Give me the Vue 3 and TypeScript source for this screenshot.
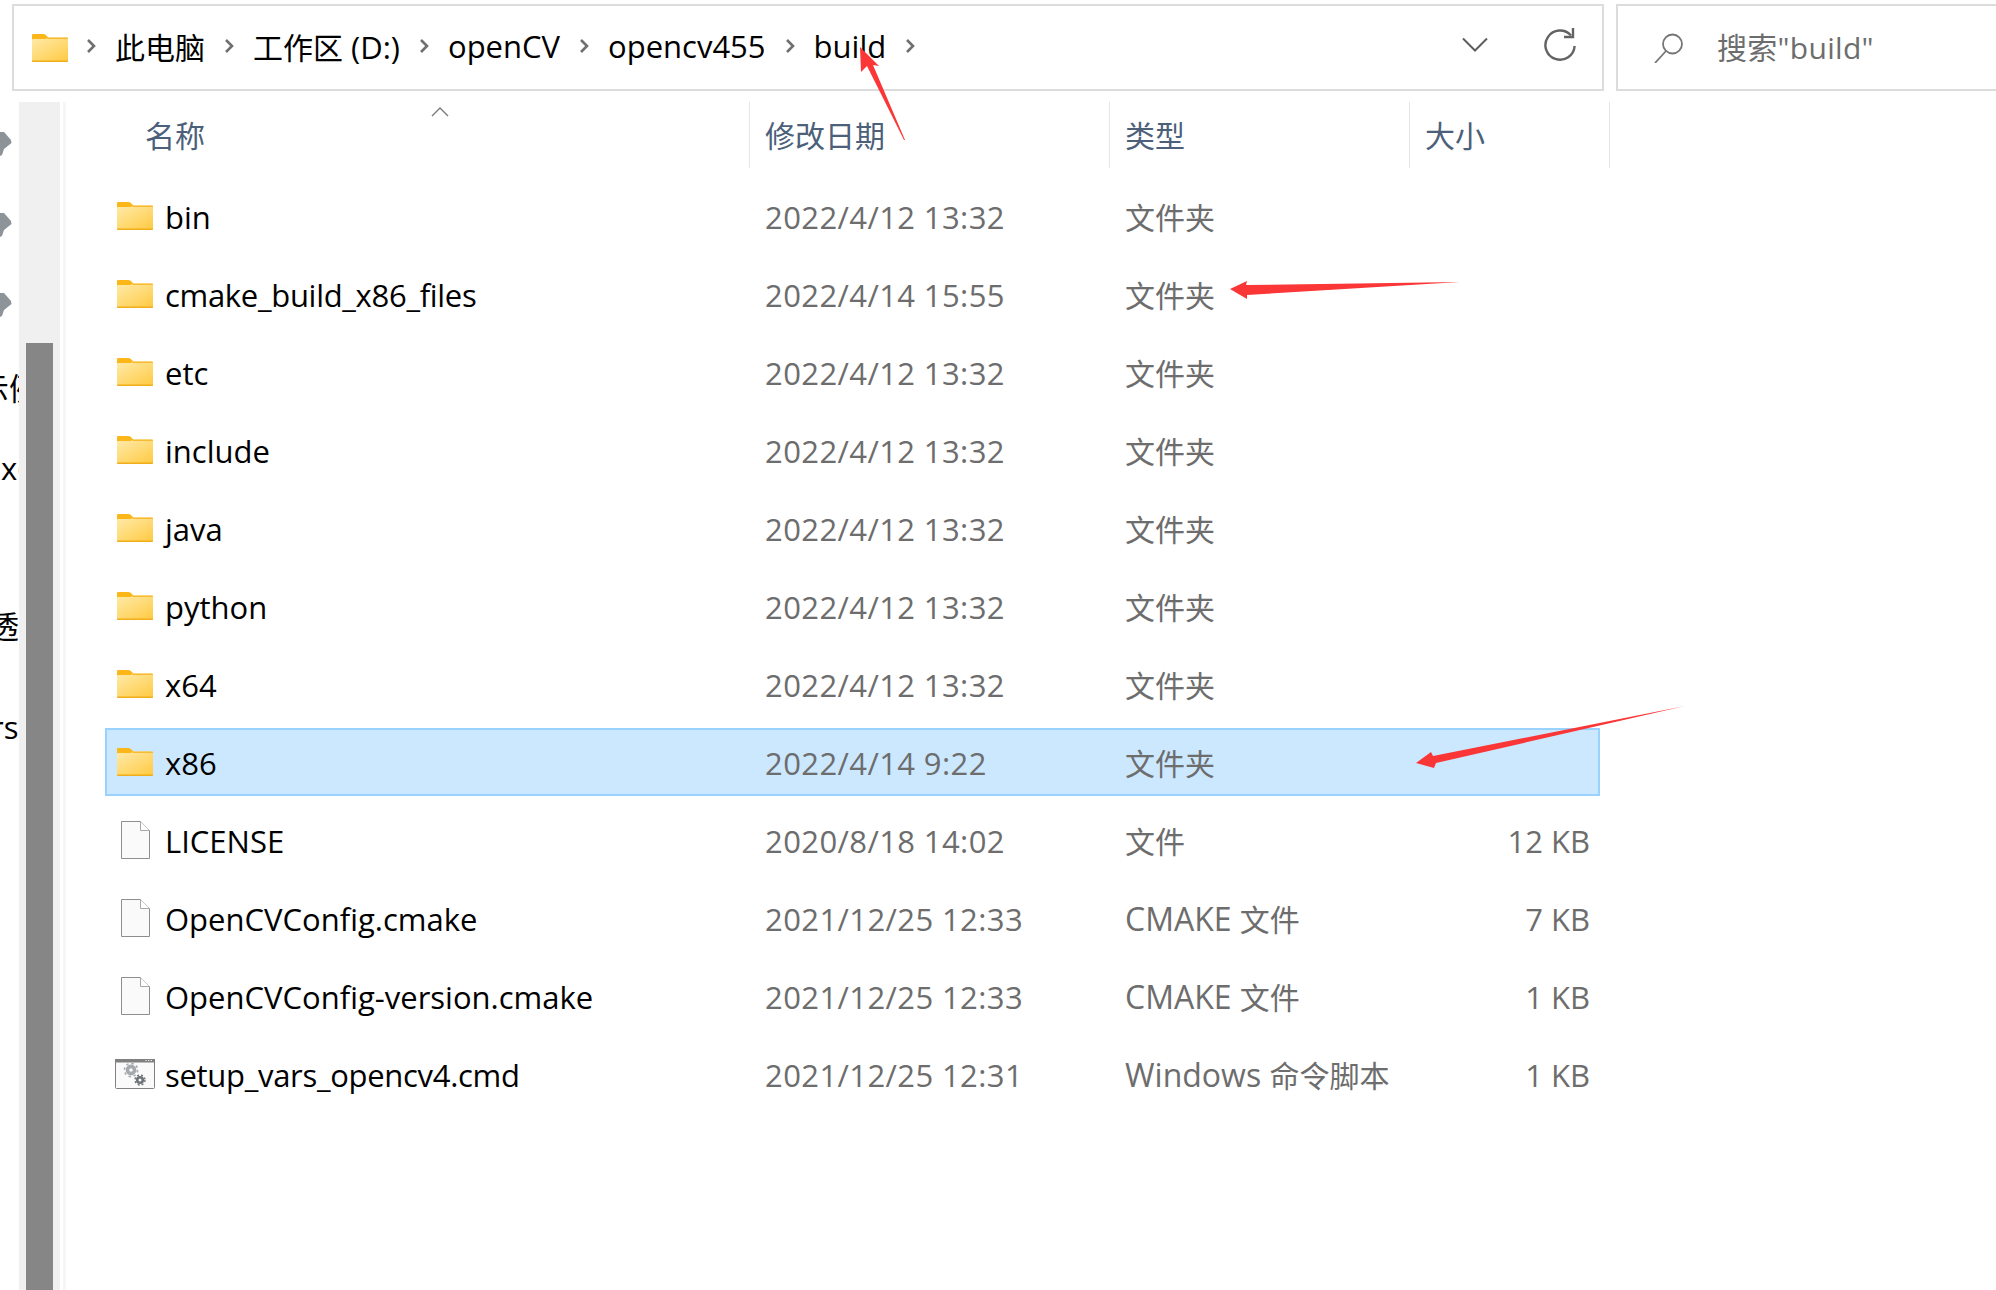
<template>
  <div class="window">
    <div class="topbar">
      <div class="address">
        <svg class="folder crumb-folder" viewBox="0 0 36 28"><use href="#folder-shape" /></svg>
        <template v-for="crumb in crumbs" :key="crumb.latin + crumb.cjk">
          <svg class="chev" viewBox="0 0 10 16"><path d="M2 2l6 6-6 6" /></svg>
          <span class="crumb"><span class="cjk">{{ crumb.cjk }}</span>{{ crumb.latin }}</span>
        </template>
        <svg class="chev" viewBox="0 0 10 16"><path d="M2 2l6 6-6 6" /></svg>
        <svg class="drop" viewBox="0 0 26 16"><path d="M1 1.5l12 12 12-12" /></svg>
        <svg class="refresh" viewBox="0 0 34 36">
          <path d="M28 8.5A14.6 14.6 0 1 0 31.6 19" />
          <path d="M30 1v9h-9" />
        </svg>
      </div>
      <div class="search">
        <svg class="lens" viewBox="0 0 30 30">
          <circle cx="18.5" cy="11" r="9.5" />
          <path d="M12 18L1 30" />
        </svg>
        <span class="search-text">搜索"build"</span>
      </div>
    </div>

    <div class="main">
      <div class="nav">
        <div v-for="item in navItems" :key="item.id" class="nav-item" :style="{ height: item.height + 'px' }">
          <svg v-if="item.pin" class="pin" viewBox="0 0 12 24"><path d="M0 0L4 0L11 8L11.500 11L4 17L2 23L0 24Z" /></svg>
          <span v-else class="nav-text" :style="{ marginLeft: item.shift + 'px' }">{{ item.text }}</span>
        </div>
      </div>
      <div class="track"><div class="thumb"></div></div>
      <div class="rule"></div>

      <div class="files">
        <div class="head">
          <div class="col col-name">名称<svg class="sort" viewBox="0 0 18 10"><path d="M1 9l8-8 8 8" /></svg></div>
          <div class="col col-date">修改日期</div>
          <div class="col col-type">类型</div>
          <div class="col col-size">大小</div>
        </div>
        <div class="rows">
          <div v-for="row in rows" :key="row.name" class="row" :class="{ selected: row.selected }">
            <div class="icon-box">
              <svg v-if="row.icon === 'folder'" class="folder" viewBox="0 0 36 28"><use href="#folder-shape" /></svg>
              <svg v-else-if="row.icon === 'file'" class="file" viewBox="0 0 29 38">
                <path d="M.5.5h19l9 9v28H.5z" fill="#fafafa" stroke="#8e8e8e" />
                <path d="M19.500.5v9h9" fill="#fff" stroke="#a8a8a8" />
              </svg>
              <svg v-else class="cmd" viewBox="0 0 40 30">
                <rect x=".5" y=".5" width="39" height="29" rx="1" fill="#fafafa" stroke="#808080" />
                <rect x="0" y="0" width="40" height="3.500" fill="#808080" />
                <path d="M33 1.500h1.400M35.600 1.500h1.400M30.400 1.500h1.400" stroke="#e6e6e6" />
                <circle cx="16" cy="11" r="3.600" fill="none" stroke="#a5a9ae" stroke-width="3.600" />
                <circle cx="16" cy="11" r="6.600" fill="none" stroke="#a5a9ae" stroke-width="1.600" stroke-dasharray="2.400 2.800" />
                <circle cx="25" cy="21" r="2.800" fill="none" stroke="#6d7278" stroke-width="2.600" />
                <circle cx="25" cy="21" r="5" fill="none" stroke="#6d7278" stroke-width="1.400" stroke-dasharray="2 2" />
              </svg>
            </div>
            <span class="name" :class="{ tight: row.name.includes('_') }">{{ row.name }}</span>
            <span class="date">{{ row.date }}</span>
            <span class="type"><span class="type-latin">{{ row.typeLatin }}</span>{{ row.type }}</span>
            <span class="size">{{ row.size }}</span>
          </div>
        </div>
      </div>
    </div>

    <svg class="defs" width="0" height="0">
      <defs>
        <linearGradient id="folder-fill" x1="0.1" y1="0" x2="0.9" y2="1">
          <stop offset="0" stop-color="#ffe9a6" />
          <stop offset="1" stop-color="#ffcb45" />
        </linearGradient>
        <g id="folder-shape">
          <path d="M1 0h10.500a3 3 0 0 1 2 .8L17 4v3H0V1a1 1 0 0 1 1-1z" fill="#fbb71a" />
          <path d="M0 6a1 1 0 0 1 1-1h12.500l2.600-1.400H35a1 1 0 0 1 1 1V27a1 1 0 0 1-1 1H1a1 1 0 0 1-1-1z" fill="url(#folder-fill)" />
          <path d="M0 26.600h36V27a1 1 0 0 1-1 1H1a1 1 0 0 1-1-1z" fill="#f0ae1b" />
          <path d="M16 3.600H35a1 1 0 0 1 1 1V5H15z" fill="#f6bb33" />
        </g>
      </defs>
    </svg>

    <!-- 红色标注箭头 -->
    <svg class="marks" viewBox="0 0 1996 1290">
      <path v-for="mark in marks" :key="mark" :d="mark" fill="#fb3636" />
    </svg>
  </div>
</template>

<script setup lang="ts">
type IconKind = 'folder' | 'file' | 'cmd'

interface FileRow {
  name: string
  date: string
  typeLatin?: string
  type: string
  size: string
  icon: IconKind
  selected?: boolean
}

// 中文和西文字号差一点，分开写
const crumbs = [
  { cjk: '此电脑', latin: '' },
  { cjk: '工作区', latin: ' (D:)' },
  { cjk: '', latin: 'openCV' },
  { cjk: '', latin: 'opencv455' },
  { cjk: '', latin: 'build' }
]

// 左侧导航被裁掉，只剩一点边缘
const navItems = [
  { id: 1, height: 81, pin: true, text: '', shift: 0 },
  { id: 2, height: 80, pin: true, text: '', shift: 0 },
  { id: 3, height: 77, pin: true, text: '', shift: 0 },
  { id: 4, height: 80, pin: false, text: '示例', shift: -22 },
  { id: 5, height: 158, pin: false, text: 'x64', shift: 1 },
  { id: 6, height: 101, pin: false, text: '透', shift: -12 },
  { id: 7, height: 60, pin: false, text: 'rso', shift: -9 }
]

const folderType = '文件夹'
const rows: FileRow[] = [
  { name: 'bin', date: '2022/4/12 13:32', type: folderType, size: '', icon: 'folder' },
  { name: 'cmake_build_x86_files', date: '2022/4/14 15:55', type: folderType, size: '', icon: 'folder' },
  { name: 'etc', date: '2022/4/12 13:32', type: folderType, size: '', icon: 'folder' },
  { name: 'include', date: '2022/4/12 13:32', type: folderType, size: '', icon: 'folder' },
  { name: 'java', date: '2022/4/12 13:32', type: folderType, size: '', icon: 'folder' },
  { name: 'python', date: '2022/4/12 13:32', type: folderType, size: '', icon: 'folder' },
  { name: 'x64', date: '2022/4/12 13:32', type: folderType, size: '', icon: 'folder' },
  { name: 'x86', date: '2022/4/14 9:22', type: folderType, size: '', icon: 'folder', selected: true },
  { name: 'LICENSE', date: '2020/8/18 14:02', type: '文件', size: '12 KB', icon: 'file' },
  { name: 'OpenCVConfig.cmake', date: '2021/12/25 12:33', typeLatin: 'CMAKE ', type: '文件', size: '7 KB', icon: 'file' },
  { name: 'OpenCVConfig-version.cmake', date: '2021/12/25 12:33', typeLatin: 'CMAKE ', type: '文件', size: '1 KB', icon: 'file' },
  { name: 'setup_vars_opencv4.cmd', date: '2021/12/25 12:31', typeLatin: 'Windows ', type: '命令脚本', size: '1 KB', icon: 'cmd' }
]

const marks = [
  'M860 47L879 66L873 65L905 140L904 140L867 66L861 72Z',
  'M1230 289L1247 281L1246 285L1460 282L1247 295L1247 299Z',
  'M1416 763L1431 752L1433 756L1685 706L1436 763L1434 768Z'
]
</script>

<style scoped>
.window {
  position: relative;
  width: 1996px;
  height: 1290px;
  overflow: hidden;
  display: flex;
  flex-direction: column;
  background: #fff;
  font-family: "Open Sans", "Noto Sans CJK SC", sans-serif;
}

.topbar {
  display: flex;
  gap: 12px;
  margin: 4px 0 0 12px;
  height: 87px;
  flex: none;
}

.address,
.search {
  display: flex;
  align-items: center;
  border: 2px solid #dcdcdc;
  box-sizing: border-box;
}

.address {
  width: 1592px;
  padding-left: 18px;
}

.search {
  flex: 1;
  border-right: none;
  padding-left: 36px;
  color: #6d6d6d;
  font-size: 30px;
  letter-spacing: 0.3px;
}

.search-text {
  padding-bottom: 4px;
}

.crumb-folder {
  margin-right: 18px;
}

.crumb {
  font-size: 31px;
  color: #000;
  white-space: pre;
  margin: 0 19px;
  padding-bottom: 4px;
}

.cjk {
  font-size: 30px;
}

.chev {
  width: 10px;
  height: 16px;
  flex: none;
  margin-top: -4px;
}

.chev path {
  fill: none;
  stroke: #6f6f6f;
  stroke-width: 2.6;
}

.drop {
  width: 26px;
  height: 16px;
  margin-left: auto;
  margin-top: -6px;
  fill: none;
  stroke: #5e5e5e;
  stroke-width: 2;
}

.refresh {
  width: 34px;
  height: 36px;
  margin: -6px 25px 0 55px;
  fill: none;
  stroke: #636363;
  stroke-width: 2.4;
}

.lens {
  width: 30px;
  height: 30px;
  margin-right: 33px;
  fill: none;
  stroke: #767676;
  stroke-width: 1.8;
}

.main {
  flex: 1;
  display: flex;
  margin-top: 11px;
  min-height: 0;
}

.nav {
  width: 19px;
  flex: none;
  overflow: hidden;
  padding-top: 30px;
}

.nav-item {
  display: flex;
  align-items: flex-start;
  font-size: 31px;
  line-height: 36px;
  white-space: nowrap;
  color: #000;
}

.pin {
  width: 12px;
  height: 24px;
  flex: none;
  fill: #8c9399;
}

.nav-text {
  flex: none;
}

.track {
  width: 41px;
  flex: none;
  background: #f0f0f0;
  padding: 241px 7px 0;
  box-sizing: border-box;
}

.thumb {
  height: 100%;
  background: #868686;
}

.rule {
  width: 3px;
  flex: none;
  margin-left: 3px;
  background: #f6f6f6;
}

.files {
  flex: 1;
  min-width: 0;
  padding-left: 39px;
}

.head {
  display: grid;
  grid-template-columns: 645px 360px 300px 200px;
  height: 66px;
}

.col {
  position: relative;
  display: flex;
  align-items: center;
  font-size: 30px;
  color: #4c607a;
  padding: 0 0 2px 15px;
  border-right: 1px solid #e5e5e5;
  box-sizing: border-box;
}

.col-name {
  padding-left: 40px;
}

.sort {
  position: absolute;
  left: 326px;
  top: 5px;
  width: 18px;
  height: 10px;
  fill: none;
  stroke: #7a7a7a;
  stroke-width: 1.4;
}

.rows {
  display: flex;
  flex-direction: column;
  gap: 10px;
  margin-top: 14px;
}

.row {
  display: grid;
  grid-template-columns: 58px 600px 360px 300px 1fr;
  align-items: center;
  width: 1495px;
  height: 68px;
  box-sizing: border-box;
  padding-right: 8px;
  border: 2px solid transparent;
  font-size: 31px;
  color: #6d6d6d;
  white-space: pre;
}

.row.selected {
  background: #cce8ff;
  border-color: #99d1ff;
}

.icon-box {
  display: flex;
  justify-content: center;
  width: 56px;
}

.folder {
  width: 36px;
  height: 28px;
  display: block;
  flex: none;
}

.file {
  width: 29px;
  height: 38px;
}

.cmd {
  width: 40px;
  height: 30px;
}

.name,
.date,
.size {
  padding-top: 2px;
}

.name {
  color: #000;
}

.name.tight {
  letter-spacing: -0.3px;
}

.date {
  letter-spacing: 0.4px;
}

.type {
  font-size: 30px;
}

.type-latin {
  font-size: 32px;
}

.size {
  text-align: right;
}

.defs {
  position: absolute;
}

.marks {
  position: absolute;
  inset: 0;
  width: 1996px;
  height: 1290px;
  pointer-events: none;
}
</style>
